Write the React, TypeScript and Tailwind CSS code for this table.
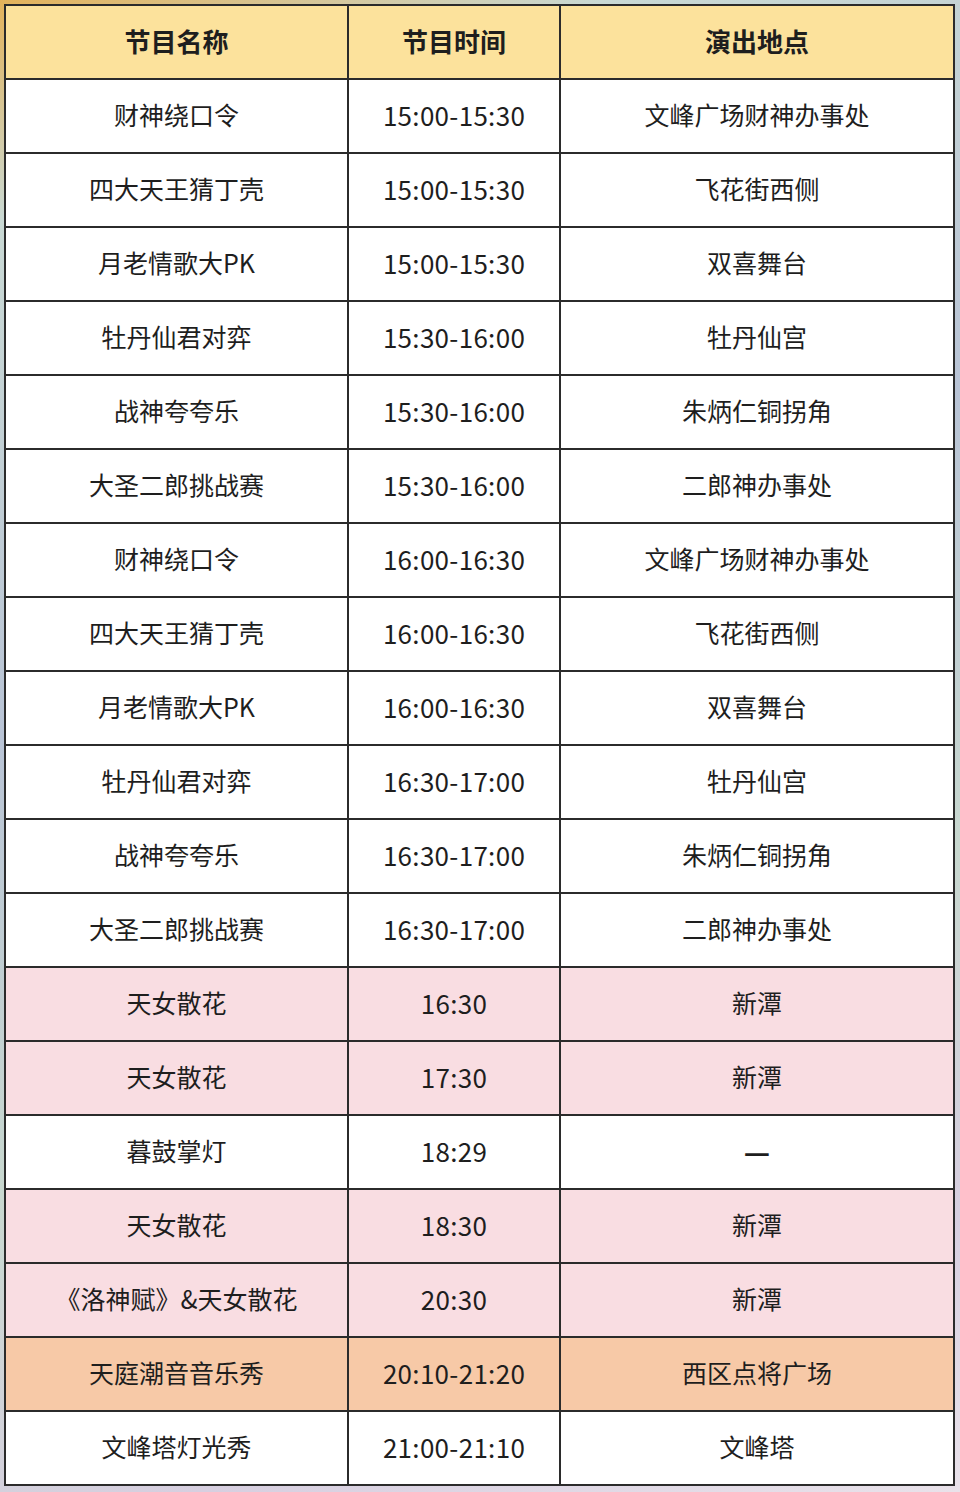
import React from "react";

type Row = { name: string; time: string; place: string; tone?: "pink" | "orange" };

const rows: Row[] = [
  { name: "财神绕口令", time: "15:00-15:30", place: "文峰广场财神办事处" },
  { name: "四大天王猜丁壳", time: "15:00-15:30", place: "飞花街西侧" },
  { name: "月老情歌大PK", time: "15:00-15:30", place: "双喜舞台" },
  { name: "牡丹仙君对弈", time: "15:30-16:00", place: "牡丹仙宫" },
  { name: "战神夸夸乐", time: "15:30-16:00", place: "朱炳仁铜拐角" },
  { name: "大圣二郎挑战赛", time: "15:30-16:00", place: "二郎神办事处" },
  { name: "财神绕口令", time: "16:00-16:30", place: "文峰广场财神办事处" },
  { name: "四大天王猜丁壳", time: "16:00-16:30", place: "飞花街西侧" },
  { name: "月老情歌大PK", time: "16:00-16:30", place: "双喜舞台" },
  { name: "牡丹仙君对弈", time: "16:30-17:00", place: "牡丹仙宫" },
  { name: "战神夸夸乐", time: "16:30-17:00", place: "朱炳仁铜拐角" },
  { name: "大圣二郎挑战赛", time: "16:30-17:00", place: "二郎神办事处" },
  { name: "天女散花", time: "16:30", place: "新潭", tone: "pink" },
  { name: "天女散花", time: "17:30", place: "新潭", tone: "pink" },
  { name: "暮鼓掌灯", time: "18:29", place: "—" },
  { name: "天女散花", time: "18:30", place: "新潭", tone: "pink" },
  { name: "《洛神赋》&天女散花", time: "20:30", place: "新潭", tone: "pink" },
  { name: "天庭潮音音乐秀", time: "20:10-21:20", place: "西区点将广场", tone: "orange" },
  { name: "文峰塔灯光秀", time: "21:00-21:10", place: "文峰塔" },
];

export default function App() {
  return (
    <div
      className="w-[960px] h-[1492px] pt-[4px] pl-[4px] bg-[linear-gradient(160deg,#e3b25a_0%,#c9d9d4_12%,#b9c4d6_40%,#c8d8cf_65%,#d7cfe0_85%,#e9e2ea_100%)]"
      style={{ fontFamily: '"Noto Sans CJK SC", "Noto Sans", sans-serif' }}
    >
      <table className="w-[949px] border-collapse table-fixed border-2 border-[#2b2b2b] text-[#1e1e1e]">
        <colgroup>
          <col className="w-[343px]" />
          <col className="w-[212px]" />
          <col className="w-[394px]" />
        </colgroup>
        <thead>
          <tr className="h-[74px] bg-[#fce29c]">
            <th className="border-2 border-[#2b2b2b] text-[26px] font-bold text-center align-middle pb-[4px]">节目名称</th>
            <th className="border-2 border-[#2b2b2b] text-[26px] font-bold text-center align-middle pb-[4px]">节目时间</th>
            <th className="border-2 border-[#2b2b2b] text-[26px] font-bold text-center align-middle pb-[4px]">演出地点</th>
          </tr>
        </thead>
        <tbody>
          {rows.map((r, i) => {
            const bg =
              r.tone === "pink" ? "bg-[#f9dde2]" : r.tone === "orange" ? "bg-[#f7c9a7]" : "bg-white";
            return (
              <tr key={i} className={`h-[74px] ${bg}`}>
                <td className="border-2 border-[#2b2b2b] text-[25px] text-center align-middle pb-[3px]">{r.name}</td>
                <td className="border-2 border-[#2b2b2b] text-[26px] tracking-[0.3px] text-center align-middle pb-[3px]">{r.time}</td>
                <td className="border-2 border-[#2b2b2b] text-[25px] text-center align-middle pb-[3px]">
                  {r.place === "—" ? <span className="text-[29px] font-bold">—</span> : r.place}
                </td>
              </tr>
            );
          })}
        </tbody>
      </table>
    </div>
  );
}
